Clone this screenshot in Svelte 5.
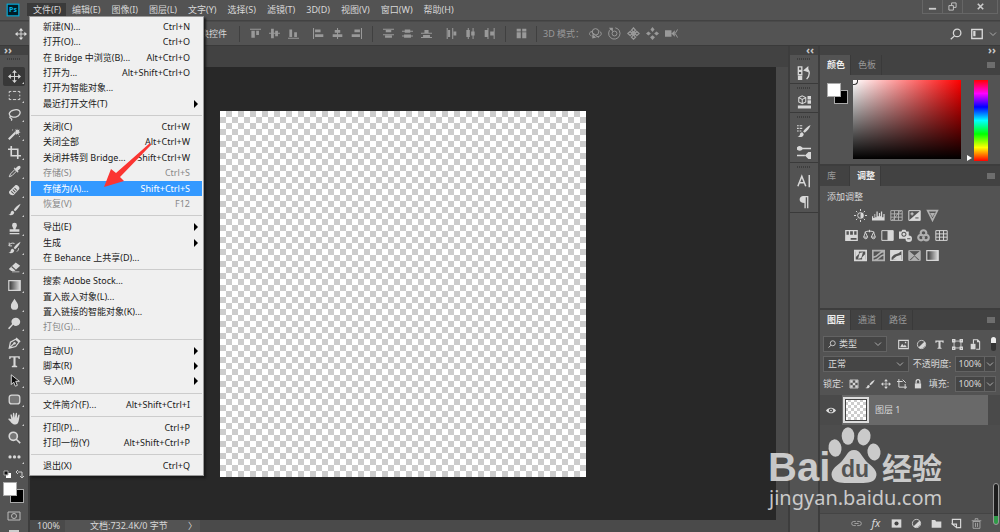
<script>
  let menuOpen = $state(true);
  let tool = $state('移动');
  let blend = $state('正常');
  let opacity = $state('100%');
  let fillValue = $state('100%');

  const menus = ['编辑(E)', '图像(I)', '图层(L)', '文字(Y)', '选择(S)', '滤镜(T)', '3D(D)', '视图(V)', '窗口(W)', '帮助(H)'];

  const fileMenu = [
    { label: '新建(N)...', keys: 'Ctrl+N' },
    { label: '打开(O)...', keys: 'Ctrl+O' },
    { label: '在 Bridge 中浏览(B)...', keys: 'Alt+Ctrl+O' },
    { label: '打开为...', keys: 'Alt+Shift+Ctrl+O' },
    { label: '打开为智能对象...' },
    { label: '最近打开文件(T)', sub: true },
    null,
    { label: '关闭(C)', keys: 'Ctrl+W' },
    { label: '关闭全部', keys: 'Alt+Ctrl+W' },
    { label: '关闭并转到 Bridge...', keys: 'Shift+Ctrl+W' },
    { label: '存储(S)', keys: 'Ctrl+S', disabled: true },
    { label: '存储为(A)...', keys: 'Shift+Ctrl+S', active: true },
    { label: '恢复(V)', keys: 'F12', disabled: true },
    null,
    { label: '导出(E)', sub: true },
    { label: '生成', sub: true },
    { label: '在 Behance 上共享(D)...' },
    null,
    { label: '搜索 Adobe Stock...' },
    { label: '置入嵌入对象(L)...' },
    { label: '置入链接的智能对象(K)...' },
    { label: '打包(G)...', disabled: true },
    null,
    { label: '自动(U)', sub: true },
    { label: '脚本(R)', sub: true },
    { label: '导入(M)', sub: true },
    null,
    { label: '文件简介(F)...', keys: 'Alt+Shift+Ctrl+I' },
    null,
    { label: '打印(P)...', keys: 'Ctrl+P' },
    { label: '打印一份(Y)', keys: 'Alt+Shift+Ctrl+P' },
    null,
    { label: '退出(X)', keys: 'Ctrl+Q' },
  ];

  // s = stroked path, f = filled path, w = stroke width, all on a 16x16 grid
  const move = { s: 'M8 2v12M2 8h12', f: 'M8 0l3 3.500H5zM8 16l3-3.500H5zM0 8l3.500-3v6zM16 8l-3.500-3v6z' };
  const brush = { f: 'M15.500 1C12 2.500 8.500 6 7 8.500L8.800 10C11.500 8 14.500 4.500 15.500 1zM6 9.500c-2 0-2.500 1.500-2.800 3C3 13.500 2 14.300.5 14.300c3 1.400 7 .7 7.200-3z' };
  const contrast = { s: 'M8 2a6 6 0 1 0 0 12A6 6 0 0 0 8 2z', f: 'M12.500 3.500A6.500 6.500 0 0 1 3.500 12.500z' };

  const tools = [
    { name: '移动', ...move },
    { name: '矩形选框', s: 'M1.500 5V3H4M6 3h4M12 3h2.500v2M14.500 7v2M14.500 11v2H12M10 13H6M4 13H1.500v-2M1.500 9V7' },
    { name: '套索', s: 'M4.500 10.500C0 9 .8 4 7 2.500s9 1.500 7.500 5-6.500 4.500-10 3c-2-.8-3 1-1.500 1.800s2.200 1.700 1 3.200', w: 1.6 },
    { name: '魔棒', s: 'M1 15l8-8', w: 2.6, f: 'M11 1.500l.8 2.500 2.500-1-1 2.300 2.200 1.200-2.500.8.500 2.500-2-1.500-1.800 1.500.2-2.500L7.500 6l2.300-.8-.8-2.300 2 .8zM5 3l1.500.500L5 4.500zM13.500 11l1.500.500-1.500 1z' },
    { name: '裁剪', s: 'M4 0v12h12M0 4h12v12', w: 2 },
    { name: '吸管', s: 'M1.500 14.500L3 11l5.500-5.500 2 2L5 13z', f: 'M7 4l1.200-1 1.300 1.200C11 2 12.500.8 14 .8c1.500.4 2 2 .8 3.700L12 7l1 1.200L12 9.500z' },
    { name: '修复画笔', f: 'M1.500 9L9 1.500c2-1 5.500 2 5 4.500L7 13.500c-3 1.500-7-2-5.500-4.500z', mark: 'M6 7l3 3M8 5l3 3M4 9l3 3' },
    { name: '画笔', ...brush },
    { name: '图章', f: 'M6.800 9C6.500 7 5 6 5 4a3 3 0 0 1 6 0c0 2-1.500 3-1.800 5H14v3H2V9zM2 13.500h12V15H2z' },
    { name: '历史记录画笔', ...brush, s: 'M1 6c1-3 4-4 7-3M1.500 2v4h3.500M13 9c0 2-1 3-2 4' },
    { name: '橡皮擦', f: 'M1 11l8.500-8L15 7l-7 6.500H4zM5 14h9v1H5z', mark: 'M4.500 8l5 4.500' },
    { name: '渐变', gradient: true },
    { name: '水滴', f: 'M8 1c2.500 4 4.500 6 4.500 9a4.500 4.500 0 0 1-9 0c0-3 2-5 4.500-9z' },
    { name: '减淡', f: 'M10 1a5 5 0 1 1-3.600 8.500L1.500 15 0 13.700 5 8.500A5 5 0 0 1 10 1z' },
    { name: '钢笔', s: 'M1.500 15L3 7.500 9.500 4l4 3.500L9.500 13zM1.500 15l6-6M10 2.500l5 4.500', w: 1.5, f: 'M8 7.500a1.500 1.500 0 1 1 0 3 1.500 1.500 0 0 1 0-3z' },
    { name: '横排文字', f: 'M1.500 1.500h13V5h-1.300L12.500 3.200H9.300V13l2 .5V15H4.700v-1.500l2-.5V3.200H3.500L2.800 5H1.500z' },
    { name: '路径选择', s: 'M4 1v12l3-3 2 5 2.500-1-2-5H14z', black: true },
    { name: '圆角矩形', s: 'M4.500 2.500h7a3 3 0 0 1 3 3v5a3 3 0 0 1-3 3h-7a3 3 0 0 1-3-3v-5a3 3 0 0 1 3-3z', soft: true, w: 1.6 },
    { name: '抓手', f: 'M4 9L3 4c0-1.500 1.500-1.500 1.800 0L6 7.500V2c0-1.500 1.700-1.500 1.800 0l.4 5L9.500 1.800c.3-1.300 1.800-1 1.700.4L11 8l1.700-4.200c.5-1.200 1.800-.6 1.500.7C13.500 9 13.500 15 9 15.500c-4 .2-5-3-8.500-6.200C0 8 1.500 7 4 9z' },
    { name: '缩放', s: 'M6.500 1.500a5 5 0 1 0 0 10 5 5 0 0 0 0-10zM10.500 10.500L15 15', w: 2, soft: true },
    { name: '更多', f: 'M2.500 6.500a2 2 0 1 1 0 4 2 2 0 0 1 0-4zM8 6.500a2 2 0 1 1 0 4 2 2 0 0 1 0-4zM13.500 6.500a2 2 0 1 1 0 4 2 2 0 0 1 0-4z' },
  ];

  const alignGroups = [
    [
      { name: '顶对齐', f: 'M0 1h16v1.500H0zM2 4h5v10H2zM9 4h4v6H9z' },
      { name: '垂直居中对齐', f: 'M0 7h16v1.500H0zM3 1h4v14H3zM9 4h4v8H9z' },
      { name: '底对齐', f: 'M0 14h16v1.500H0zM2 2h4v11H2zM9 6h4v7H9z' },
    ],
    [
      { name: '左对齐', f: 'M0 0h1.500v16H0zM3 2h8v4H3zM3 9h12v4H3z' },
      { name: '水平居中对齐', f: 'M7.300 0h1.500v16H7.300zM4 3h8v4H4zM1 9h14v4H1z' },
      { name: '右对齐', f: 'M14.500 0H16v16h-1.500zM5 2h8v4H5zM1 9h12v4H1z' },
    ],
    [
      { name: '按顶分布', f: 'M0 1h16v1.500H0zM4 3h8v3H4zM0 9h16v1.500H0zM3 11h10v3H3z' },
      { name: '垂直居中分布', f: 'M0 4h16v1.500H0zM4 2h8v5H4zM0 11h16v1.500H0zM3 9.500h10v4.500H3z' },
      { name: '按底分布', f: 'M0 7h16v1.500H0zM5 3h6v4H5zM0 13h16v1.500H0zM3 10h10v3H3z' },
    ],
    [
      { name: '按左分布', f: 'M1 0h1.500v16H1zM3 3h3v10H3zM9 0h1.500v16H9zM11 5h4v6h-4z' },
      { name: '水平居中分布', f: 'M4 0h1.500v16H4zM2 3h5v10H2zM11 0h1.500v16H11zM9 5h5v6H9z' },
      { name: '按右分布', f: 'M5 0h1.500v16H5zM1 3h4v10H1zM14 0h1.500v16H14zM9 5h5v6H9z' },
    ],
  ];

  const modes3d = [
    { name: '旋转', s: 'M5 5c-5 1-6 4-2 6M13 5c4 3 2 7-4 7M8 2a4 4 0 1 1 0 8 4 4 0 0 1 0-8zM3 6l9 7', f: 'M4 9l5 4-5 1z' },
    { name: '滚动', s: 'M4 2a7 7 0 1 0 5-1M8 5a3 3 0 1 0 0 6 3 3 0 0 0 0-6z', f: 'M1 1h5v5z' },
    { name: '拖动', s: 'M8 1l2.500 3L8 6 5.500 4zM8 10l2.500 2.500L8 15l-2.500-2.500zM1 8l3-2.500L6 8l-2 2.500zM10 8l2-2.500L15 8l-3 2.500zM6 6l4 4M10 6l-4 4', w: 1.5 },
    { name: '滑动', f: 'M8 0l2.500 3L8 6 5.500 3zM8 10l3 2.500L8 16l-3-3.500zM0 8l3-2.500L6 8l-3 2.500zM10 8l3-2.500L16 8l-3 2.500z' },
    { name: '缩放', s: 'M15.500 3l-3 5 3 5', f: 'M0 4h8v8H0zM8 8l4-4v8z' },
  ];

  const adjustments = [
    [
      { name: '亮度/对比度', s: 'M8 4.500a3.500 3.500 0 1 0 0 7M8 0v2.500M8 13.500V16M0 8h2.500M13.500 8H16M2.500 2.500L4 4M12 12l1.500 1.500M2.500 13.500L4 12M12 4l1.500-1.500', f: 'M8 4a4 4 0 0 1 0 8z' },
      { name: '色阶', f: 'M0 14V9h1.500v2H3V6h1v4h1.500V3H7v6h1.500V5H10v4h1V3h1.500v7H14V6h1.500v8z' },
      { name: '曲线', s: 'M1 2h14v12H1zM5.500 2v12M10.500 2v12M1 6h14M1 10h14M2 14C8 12 8 4 14 2', dim: true },
      { name: '曝光度', s: 'M1 2h14v12H1zM3 6h4M5 4v4', f: 'M15 2v12H1z', mark: 'M9 11h4' },
      { name: '自然饱和度', s: 'M2 2h12L8 14z', w: 2, f: 'M5 5h6l-3 5z', dim: true },
    ],
    [
      { name: '色相/饱和度', s: 'M1 2h14v12H1zM1 8h14M5.500 2v6M10.500 2v6', w: 1.600, f: 'M1 8h14v3H1zM1 11h6v3H1z' },
      { name: '色彩平衡', s: 'M2 4c3-2 9-2 12 0M8 1v3M3 4L.8 10h5zM13 4l-2.800 6h5zM1 10.500c1 2 4 2 4.500 0M10.500 10.500c1 2 4 2 4.500 0' },
      { name: '黑白', s: 'M1 2h14v12H1z', f: 'M8 2h7v12H8z' },
      { name: '照片滤镜', f: 'M0 3h3l1-2h4l1 2h3v5l-4 4H0zM12 8a4 4 0 1 1 0 8 4 4 0 0 1 0-8z', mark: 'M6 4a2.500 2.500 0 1 0 .1 0M10 12h4' },
      { name: '通道混合器', s: 'M8 1.500a3.500 3.500 0 1 0 0 7 3.500 3.500 0 0 0 0-7zM5 7a3.500 3.500 0 1 0 0 7 3.500 3.500 0 0 0 0-7zM11 7a3.500 3.500 0 1 0 0 7 3.500 3.500 0 0 0 0-7z', w: 2.600, dim: true },
      { name: '颜色查找', s: 'M1 2h14v12H1zM5.500 2v12M10.500 2v12M1 6h14M1 10h14' },
    ],
    [
      { name: '反相', s: 'M1 2h14v12H1z', w: 2.200, f: 'M2 2h4v4l-4 4zM14 14h-4v-4l4-4zM11 4L9 11 5 12l2-7z' },
      { name: '色调分离', s: 'M1 2h14v12H1zM2 10c5 0 6-6 12-7M3 14c6-1 6-6 12-7', w: 2, dim: true },
      { name: '阈值', s: 'M1 2h14v12H1z', w: 1.800, f: 'M1 2h13l-3 3-6 2-4 4zM3 13l5-4 6-2v7z' },
      { name: '可选颜色', s: 'M1 2h14v12H1z', f: 'M1 2l7 6-7 6zM15 2L8 8l7 6zM3 14l5-5 5 5z', dim: true },
      { name: '渐变映射', gradient: true },
    ],
  ];

  const layerFilters = [
    { name: '像素', s: 'M1 2h14v12H1z', w: 1.6, f: 'M3 12l3-5 2.500 3L10 8l3 4zM10 4h2v2h-2z' },
    { name: '调整', ...contrast },
    { name: '文字', f: 'M2 2h12v3.500h-1.500L12 4H9.500v8.500L11 13v1H5v-1l1.500-.5V4H4l-.5 1.500H2z' },
    { name: '形状', s: 'M3 3h10v10H3z', f: 'M0 0h5v5H0zM11 0h5v5h-5zM0 11h5v5H0zM11 11h5v5h-5z', hollow: 'M2 2h1v1H2zM13 2h1v1h-1zM2 13h1v1H2zM13 13h1v1h-1z' },
    { name: '智能对象', s: 'M5 7V1h6l3 3v11H9M11 1v3h3', w: 1.6, f: 'M1 7h7v8H1z' },
  ];

  const locks = [
    { name: '锁定透明像素', s: 'M1.500 1.500h13v13h-13z', f: 'M2 2h4v4H2zM10 2h4v4h-4zM6 6h4v4H6zM2 10h4v4H2zM10 10h4v4h-4z' },
    { name: '锁定图像像素', ...brush },
    { name: '锁定位置', ...move },
    { name: '锁定画板', s: 'M3 0v13h13M0 4h9M13 8v8M9 1l5 5', w: 1.6 },
    { name: '锁定全部', s: 'M5 7V4a3 3 0 0 1 6 0v3', w: 2, f: 'M3 7h10v8H3z' },
  ];

  const layerActions = [
    { name: '链接图层', s: 'M7 5H4a3 3 0 0 0 0 6h3M9 5h3a3 3 0 0 1 0 6H9M5 8h6', dim: true },
    { name: '图层样式', fx: true },
    { name: '添加蒙版', f: 'M1 2h14v12H1z', dot: true },
    { name: '新建调整图层', ...contrast },
    { name: '新建组', f: 'M1 3h5l1.500 2H15v9H1z' },
    { name: '新建图层', s: 'M2 10V2h12v12H9M2 9h6v5z', w: 1.7 },
    { name: '删除图层', s: 'M3 5h10v10H3zM1 4h14M6 3V1h4v2M6.500 7v6M9.500 7v6', dim: true },
  ];

  const dock = [
    [{ name: '历史记录', s: 'M1.500 1h4v4h-4zM1.500 6h4v4h-4zM11 4c4 1 4 7 0 11', w: 1.500, f: 'M1 11h5v5H1zM7 5l6-5v7z' }],
    [{ name: '3D', s: 'M6 1l4 2v5l-4 2-4-2V3zM2 3l4 2 4-2M6 5v5', f: 'M12 1h4v4h-4zM12 6h4v4h-4zM1 12h15v3.500H1z' }],
    [
      { name: '画笔预设', s: 'M0 2h2M3 2h3M0 5h2M3 5h3M0 8h2M3 8h2', f: brush.f },
      { name: '画笔', s: 'M6 4h10M0 12h9', w: 1.6, f: 'M0 2.500C3 0 5 1 7 4 5 7 3 7 0 5.500zM9 12l4-4h3v8h-3z' },
    ],
    [
      { name: '字符', s: 'M1 14L5.500 2.500 10 14M2.500 10h6M14 1v14', w: 1.7 },
      { name: '段落', f: 'M7 1h6v14h-1.500V2.500H10V15H8.500V9C5 9 3 7.500 3 5s2-4 4-4z' },
    ],
  ];

  const search = { s: 'M9.500 1.500a5 5 0 1 0 0 10 5 5 0 0 0 0-10zM6 10.500L1 15', w: 1.7 };
</script>

{#snippet icon(i)}
  <svg class="icon" class:dim={i.dim} viewBox="0 0 16 16" aria-hidden="true">
    {#if i.gradient}
      <defs>
        <linearGradient id="grad-{i.name}">
          <stop offset="0" stop-color="#333" />
          <stop offset="1" stop-color="#ddd" />
        </linearGradient>
      </defs>
      <rect x="1" y="2" width="14" height="12" fill="url(#grad-{i.name})" stroke="currentColor" stroke-width="1.500" />
    {/if}
    {#if i.f}<path d={i.f} fill="currentColor" />{/if}
    {#if i.s}
      <path
        d={i.s}
        fill={i.black ? '#111' : i.soft ? '#777' : 'none'}
        stroke="currentColor"
        stroke-width={i.w ?? 1.2}
      />
    {/if}
    {#if i.mark}<path d={i.mark} fill="none" stroke="#535353" stroke-width="1.300" />{/if}
    {#if i.hollow}<path d={i.hollow} fill="#535353" />{/if}
    {#if i.dot}<circle cx="8" cy="8" r="3" fill="#444" />{/if}
  </svg>
{/snippet}

{#snippet chevron()}
  <svg class="chevron" viewBox="0 0 8 8" aria-hidden="true">
    <path d="M1 2.500l3 3 3-3" fill="none" stroke="currentColor" />
  </svg>
{/snippet}

{#snippet panelMenu()}
  <button class="panel-menu" aria-label="面板菜单">
    <svg viewBox="0 0 8 6" aria-hidden="true"><path d="M0 1h8M0 3h8M0 5h8" stroke="currentColor" /></svg>
  </button>
{/snippet}

<div class="app">
  <header class="menubar">
    <svg class="logo" viewBox="0 0 12 12" aria-label="Photoshop">
      <rect x="1" y="1" width="10" height="10" fill="#001d26" stroke="#00a8d6" />
      <text x="6" y="8" text-anchor="middle">Ps</text>
    </svg>
    <nav>
      <div class="file">
        <button class:open={menuOpen} onclick={() => (menuOpen = !menuOpen)}>文件(F)</button>
        {#if menuOpen}
          <ul class="file-menu">
            {#each fileMenu as item}
              {#if item}
                <li>
                  <button class:active={item.active} disabled={item.disabled}>
                    <span>{item.label}</span>
                    {#if item.keys}<span>{item.keys}</span>{/if}
                    {#if item.sub}<i class="arrow"></i>{/if}
                  </button>
                </li>
              {:else}
                <li class="rule" role="separator"></li>
              {/if}
            {/each}
          </ul>
          <svg class="pointer" viewBox="0 0 50 46" aria-hidden="true">
            <path d="M1 45L8 27l5 4L47 1l1 2L17 35l4 4z" fill="#fb3532" />
          </svg>
        {/if}
      </div>
      {#each menus as menu}
        <button>{menu}</button>
      {/each}
    </nav>
    <div class="window">
      <button aria-label="最小化"><svg viewBox="0 0 10 10"><path d="M1 7.500h8" stroke-width="2" /></svg></button>
      <button aria-label="还原"><svg viewBox="0 0 10 10"><path d="M1 4h5v5H1zM4 4V1h5v5H6" /></svg></button>
      <button class="close" aria-label="关闭"><svg viewBox="0 0 10 10"><path d="M2 2l6 6M8 2L2 8" stroke-width="1.800" /></svg></button>
    </div>
  </header>

  <div class="options">
    <div class="current">{@render icon(move)}</div>
    <span class="transform">换控件</span>
    {#each alignGroups as group, g}
      <div class="group" class:divided={g % 2 === 0}>
        {#each group as item}
          <button aria-label={item.name}>{@render icon(item)}</button>
        {/each}
      </div>
    {/each}
    <div class="group divided auto">
      <button aria-label="自动对齐">
        {@render icon({ f: 'M1 1h6v4H1zM9 1h6v4H9zM1 6h6v9H1zM9 6h6v9H9z' })}
      </button>
    </div>
    <div class="group divided modes">
      <span>3D 模式：</span>
      {#each modes3d as item}
        <button aria-label={item.name}>{@render icon(item)}</button>
      {/each}
    </div>
    <div class="right">
      <button aria-label="搜索">{@render icon(search)}</button>
      <button aria-label="工作区">
        {@render icon({ s: 'M1 2h14v12H1z', w: 1.8, f: 'M3 4h3v7H3z' })}
        {@render chevron()}
      </button>
    </div>
  </div>

  <div class="workspace">
    <aside class="tools">
      <div class="collapse left">››</div>
      <div class="grip"></div>
      {#each tools as item}
        <button
          class="tool"
          class:selected={tool === item.name}
          class:corner={item.name !== '缩放'}
          aria-label={item.name}
          onclick={() => (tool = item.name)}
        >
          {@render icon(item)}
        </button>
      {/each}
      <svg class="defaults" viewBox="0 0 22 8" aria-hidden="true">
        <path d="M3 3h5v5H3z" fill="#fff" />
        <path d="M1 1h4v4H1z" fill="#111" stroke="#aaa" />
        <path d="M15 2h4v5M15 0l-2 2 2 2M17 6l2 2 2-2" fill="none" stroke="#ccc" />
      </svg>
      <div class="swatches"><i class="back"></i><i class="front"></i></div>
      <button class="mask" aria-label="快速蒙版">
        <svg viewBox="0 0 14 10"><path d="M1 1h12v8H1z" /><circle cx="7" cy="5" r="2.500" /></svg>
      </button>
      <div class="screen"></div>
    </aside>

    <main>
      <div class="doc-tabs"></div>
      <div class="stage">
        <div class="canvas"><div class="artboard"></div></div>
        <div class="scroll"></div>
      </div>
      <footer>
        <span class="zoom">100%</span>
        <span class="info">文档:732.4K/0 字节</span>
        <span class="more">〉</span>
      </footer>
    </main>

    <aside class="dock">
      <div class="collapse">‹‹</div>
      {#each dock as group}
        <div class="dock-group">
          <div class="grip"></div>
          {#each group as item}
            <button aria-label={item.name}>{@render icon(item)}</button>
          {/each}
        </div>
      {/each}
    </aside>

    <aside class="panels">
      <div class="collapse">››</div>
      <section>
        <div class="tabs">
          <button class="on">颜色</button><button>色板</button>
          {@render panelMenu()}
        </div>
        <div class="color">
          <div class="swatches"><i class="back"></i><i class="front"></i></div>
          <div class="field"></div>
          <div class="hue"></div>
        </div>
      </section>

      <section class="adjust">
        <div class="tabs">
          <button>库</button><button class="on">调整</button>
          {@render panelMenu()}
        </div>
        <p>添加调整</p>
        {#each adjustments as row}
          <div class="row">
            {#each row as item}
              <button aria-label={item.name}>{@render icon(item)}</button>
            {/each}
          </div>
        {/each}
      </section>

      <section class="layers">
        <div class="tabs">
          <button class="on">图层</button><button>通道</button><button>路径</button>
          {@render panelMenu()}
        </div>
        <div class="line filter">
          <div class="select kind">
            {@render icon(search)}
            <select aria-label="图层过滤"><option>类型</option></select>
            {@render chevron()}
          </div>
          <div class="icons">
            {#each layerFilters as item}
              <button aria-label={item.name}>{@render icon(item)}</button>
            {/each}
          </div>
          <i class="toggle"></i>
        </div>
        <div class="line">
          <div class="select blend">
            <select aria-label="混合模式" bind:value={blend}><option>正常</option></select>
            {@render chevron()}
          </div>
          <label for="opacity">不透明度:</label>
          <div class="number">
            <input id="opacity" bind:value={opacity} />
            <span>{@render chevron()}</span>
          </div>
        </div>
        <div class="line">
          <span>锁定:</span>
          <div class="icons locks">
            {#each locks as item}
              <button aria-label={item.name}>{@render icon(item)}</button>
            {/each}
          </div>
          <label for="fill">填充:</label>
          <div class="number">
            <input id="fill" bind:value={fillValue} />
            <span>{@render chevron()}</span>
          </div>
        </div>
        <div class="layer">
          <button class="eye" aria-label="可见性">
            <svg viewBox="0 0 12 8">
              <path d="M0 4c3-4.500 9-4.500 12 0-3 4.500-9 4.500-12 0z" fill="#ddd" />
              <circle cx="6" cy="4" r="2.500" fill="#444" /><circle cx="6" cy="4" r="1" fill="#ddd" />
            </svg>
          </button>
          <div class="layer-body">
            <div class="thumb"></div>
            <span>图层 1</span>
          </div>
        </div>
        <div class="empty"></div>
        <div class="actions">
          {#each layerActions as item}
            <button aria-label={item.name}>
              {#if item.fx}<em>fx</em>{:else}{@render icon(item)}{/if}
            </button>
          {/each}
        </div>
      </section>
    </aside>
  </div>

  <svg class="watermark" viewBox="0 0 184 84" aria-label="Baidu 经验">
    <text class="brand" x="1" y="54">Bai</text>
    <ellipse cx="68" cy="21" rx="6.500" ry="8.700" transform="rotate(-8 68 21)" />
    <ellipse cx="81" cy="9" rx="6.300" ry="8.700" />
    <ellipse cx="97" cy="10" rx="6.500" ry="8.500" transform="rotate(12 97 10)" />
    <ellipse cx="107" cy="25" rx="6.500" ry="8.500" transform="rotate(-8 107 25)" />
    <path d="M87 23c7 0 8 8 14 13 6 5 10 9 8 14-2 7-12 6-22 6s-20 1-22-6c-2-6 3-10 8-14 6-5 7-13 14-13z" />
    <text class="du" x="74" y="50">du</text>
    <text class="exp" x="115" y="52">经验</text>
    <text class="site" x="2" y="78">jingyan.baidu.com</text>
  </svg>

  <div class="meter"></div>
</div>

<style>
  :global(body) {
    margin: 0;
    background: #535353;
  }

  .app {
    position: relative;
    display: flex;
    flex-direction: column;
    height: 100vh;
    overflow: hidden;
    background: #3d3d3d;
    color: #d8d8d8;
    font-family: 'Noto Sans', 'Noto Sans CJK SC', sans-serif;
    font-size: 9px;
    line-height: 12px;
  }

  button,
  input,
  select {
    margin: 0;
    padding: 0;
    border: 0;
    background: none;
    color: inherit;
    font: inherit;
  }

  button {
    display: flex;
    align-items: center;
    justify-content: center;
  }

  svg {
    display: block;
    flex: none;
  }

  .icon {
    width: 12px;
    height: 12px;
  }

  .icon.dim {
    opacity: 0.7;
  }

  .chevron {
    width: 8px;
    height: 8px;
    color: #aaa;
  }

  .menubar {
    display: flex;
    flex: none;
    height: 20px;
    background: #535353;
    border-bottom: 1px solid #424242;
  }

  .logo {
    width: 14px;
    height: 14px;
    margin: 3px 7px 0 6px;
  }

  .logo text {
    fill: #00b4e6;
    font-size: 6px;
    font-weight: bold;
  }

  nav {
    display: flex;
    align-items: flex-start;
    padding-top: 3px;
  }

  nav button {
    height: 13px;
    padding: 0 5px 0 6px;
    white-space: nowrap;
  }

  nav button.open {
    background: #3a3a3a;
  }

  .file {
    position: relative;
    z-index: 5;
  }

  .file-menu {
    position: absolute;
    top: 13px;
    left: 2px;
    display: flex;
    flex-direction: column;
    box-sizing: border-box;
    width: 175px;
    height: 460px;
    margin: 0;
    padding: 2px 1px 1px;
    list-style: none;
    background: #f0f0f0;
    border: 1px solid #999;
    box-shadow: 2px 2px 2px #1a1a1a;
    color: #1a1a1a;
  }

  .file-menu li {
    display: flex;
    flex: 2 0 0;
  }

  .file-menu .rule {
    flex: 1 0 0;
    align-items: center;
  }

  .rule::before {
    content: '';
    flex: 1;
    height: 1px;
    background: #ccc;
  }

  .file-menu button {
    flex: 1;
    justify-content: space-between;
    height: auto;
    padding: 0 12px;
  }

  .file-menu button:disabled {
    color: #888;
  }

  .file-menu button.active {
    background: #3399ff;
    color: #fff;
  }

  .arrow {
    margin-right: -8px;
    border: 4px solid transparent;
    border-right: 0;
    border-left-color: #000;
  }

  .pointer {
    position: absolute;
    top: 139px;
    left: 76px;
    width: 50px;
    height: 46px;
  }

  .window {
    display: flex;
    height: 13px;
    margin: 0 2px 0 auto;
    border: 1px solid #666;
    border-top: 0;
  }

  .window button {
    width: 20px;
    border-right: 1px solid #666;
  }

  .window .close {
    width: 34px;
    border: 0;
  }

  .window svg {
    width: 9px;
    height: 9px;
    fill: none;
    stroke: #ccc;
  }

  .options {
    display: flex;
    flex: none;
    align-items: center;
    box-sizing: border-box;
    height: 25px;
    background: #535353;
    border-top: 1px solid #4a4a4a;
    border-bottom: 1px solid #3a3a3a;
    white-space: nowrap;
  }

  .current {
    padding-left: 15px;
    color: #ddd;
  }

  .transform {
    width: 27px;
    margin: 0 12px 0 173px;
  }

  .group {
    display: flex;
    align-items: center;
    height: 16px;
    padding: 0 6px;
    color: #999;
  }

  .group.divided {
    padding-right: 0;
    border-left: 1px solid #404040;
  }

  .group.auto {
    padding-right: 5px;
  }

  .group button {
    width: 19px;
  }

  .group .icon {
    width: 11px;
    height: 11px;
  }

  .group.modes span {
    width: 43px;
  }

  .group.modes .icon {
    width: 13px;
    height: 13px;
  }

  .right {
    display: flex;
    gap: 9px;
    margin: 0 3px 0 auto;
  }

  .right button {
    gap: 6px;
  }

  .workspace {
    display: grid;
    flex: 1;
    grid-template-columns: 28px 1fr 28px 180px;
    gap: 2px;
    min-height: 0;
  }

  aside {
    display: flex;
    flex-direction: column;
    min-height: 0;
    background: #535353;
  }

  .collapse {
    flex: none;
    height: 9px;
    padding-right: 4px;
    background: #424242;
    color: #ccc;
    font-size: 11px;
    font-weight: bold;
    line-height: 7px;
    text-align: right;
  }

  .collapse.left {
    padding-left: 4px;
    text-align: left;
  }

  .grip {
    flex: none;
    align-self: center;
    width: 14px;
    height: 2px;
    margin: 3px auto 0;
    background: repeating-linear-gradient(90deg, #3d3d3d 0 1px, #535353 1px 2px);
  }

  .tools .grip {
    margin-bottom: 7px;
  }

  .tool {
    position: relative;
    flex: none;
    height: 19px;
    margin: 0 3px;
    border-radius: 2px;
  }

  .tool .icon {
    width: 13px;
    height: 13px;
  }

  .tool.selected {
    background: #383838;
  }

  .tool.corner::after {
    content: '';
    position: absolute;
    right: 1px;
    bottom: 2px;
    border: 1px solid #ccc;
    border-top-color: transparent;
    border-left-color: transparent;
  }

  .defaults {
    width: 22px;
    height: 8px;
    margin: 4px 3px;
  }

  .swatches {
    display: grid;
    flex: none;
    width: 21px;
    height: 21px;
    margin: 0 3px;
  }

  .swatches i {
    box-sizing: border-box;
    grid-area: 1 / 1;
    width: 14px;
    height: 14px;
    border: 1px solid #aaa;
  }

  .back {
    place-self: end;
    background: #000;
  }

  .front {
    background: #fff;
  }

  .mask {
    flex: none;
    margin-top: 8px;
  }

  .mask svg {
    width: 14px;
    height: 10px;
    fill: none;
    stroke: #bbb;
  }

  .screen {
    flex: none;
    width: 10px;
    height: 6px;
    margin: 9px auto 0;
    background: #ccc;
  }

  main {
    display: flex;
    flex-direction: column;
    min-width: 0;
    background: #282828;
  }

  .doc-tabs {
    flex: none;
    height: 21px;
    background: #424242;
  }

  .stage {
    display: flex;
    flex: 1;
  }

  .canvas {
    display: flex;
    flex: 1;
    align-items: center;
    justify-content: center;
  }

  .artboard {
    width: 366px;
    height: 366px;
    background: repeating-conic-gradient(#ccc 0 25%, #fff 0 50%) 0 0 / 12px 12px;
  }

  .scroll {
    width: 12px;
    background: #4a4a4a;
  }

  footer {
    display: flex;
    flex: none;
    height: 12px;
    background: #4a4a4a;
  }

  .zoom {
    width: 28px;
    padding-left: 7px;
  }

  .info {
    width: 98px;
    padding-left: 25px;
    background: #535353;
  }

  .more {
    width: 12px;
    background: #535353;
  }

  .dock-group {
    border-bottom: 1px solid #3a3a3a;
  }

  .dock-group button {
    width: 28px;
    height: 21px;
  }

  .dock-group .grip {
    margin-bottom: 2px;
  }

  .dock .icon {
    width: 14px;
    height: 14px;
  }

  section {
    border-bottom: 2px solid #3d3d3d;
  }

  .tabs {
    display: flex;
    height: 20px;
    margin-bottom: 5px;
    background: #424242;
  }

  .tabs button {
    justify-content: flex-start;
    min-width: 30px;
    padding: 0 5px 0 7px;
    border-right: 1px solid #3a3a3a;
    color: #999;
  }

  .tabs .on {
    background: #535353;
    color: #eee;
    font-weight: bold;
  }

  .tabs .panel-menu {
    justify-content: flex-end;
    margin-left: auto;
    border: 0;
  }

  .panel-menu svg {
    width: 8px;
    height: 6px;
  }

  .color {
    display: flex;
    padding: 0 12px 3px 4px;
  }

  .color .swatches {
    margin: 3px 5px 0 3px;
  }

  .field {
    flex: 1;
    height: 79px;
    margin-right: 13px;
    background: linear-gradient(transparent, #000), linear-gradient(90deg, #fff, #f00);
  }

  .field::before {
    content: '';
    display: block;
    width: 4px;
    height: 4px;
    border: 1px solid #333;
    border-width: 0 1px 1px 0;
    border-radius: 0 0 4px;
  }

  .hue {
    width: 14px;
    background: linear-gradient(#f00, #f0f, #00f, #0ff, #0f0, #ff0, #f00);
  }

  .hue::before {
    content: '';
    display: block;
    margin: 75px 0 0 -7px;
    width: 0;
    border: 3px solid transparent;
    border-right: 0;
    border-left: 5px solid #fff;
  }

  .adjust {
    height: 142px;
    flex: none;
  }

  .adjust p {
    margin: 0 0 2px 7px;
  }

  .adjust .row {
    display: flex;
    gap: 5px;
    justify-content: center;
    height: 20px;
    padding-right: 28px;
  }

  .adjust .icon {
    width: 13px;
    height: 13px;
  }

  .layers {
    display: flex;
    flex: 1;
    flex-direction: column;
    min-height: 0;
    border: 0;
  }

  .layers .tabs {
    flex: none;
    margin-bottom: 4px;
  }

  .line {
    display: flex;
    flex: none;
    align-items: center;
    justify-content: space-between;
    height: 20px;
    padding: 0 4px 0 3px;
    white-space: nowrap;
  }

  .select {
    display: flex;
    align-items: center;
    box-sizing: border-box;
    height: 16px;
    padding: 0 4px;
    background: #454545;
    border: 1px solid #636363;
  }

  .kind {
    width: 64px;
  }

  .blend {
    width: 86px;
  }

  .kind .icon {
    width: 8px;
    height: 8px;
    margin-right: 3px;
  }

  select {
    flex: 1;
    min-width: 0;
    appearance: none;
  }

  .icons {
    display: flex;
    gap: 7px;
  }

  .filter .icons .icon {
    width: 11px;
    height: 11px;
  }

  .locks {
    gap: 6px;
  }

  .locks .icon {
    width: 10px;
    height: 10px;
  }

  .toggle {
    width: 5px;
    height: 14px;
    background: linear-gradient(#eee 6px, #333 6px);
    border-radius: 4px;
  }

  .number {
    display: flex;
    height: 14px;
    border: 1px solid #636363;
    background: #454545;
  }

  .number input {
    width: 28px;
    text-align: center;
  }

  .number span {
    display: flex;
    align-items: center;
    padding: 0 1px;
    border-left: 1px solid #636363;
  }

  .layer {
    display: flex;
    flex: none;
    height: 30px;
    margin-top: 1px;
    background: #4a4a4a;
  }

  .eye {
    width: 22px;
  }

  .eye svg {
    width: 10px;
    height: 7px;
  }

  .layer-body {
    display: flex;
    flex: 1;
    gap: 6px;
    align-items: center;
    margin-right: 12px;
    padding-left: 1px;
    background: #696969;
  }

  .thumb {
    width: 22px;
    height: 22px;
    border: 2px solid #ddd;
    outline: 1px solid #444;
    outline-offset: -3px;
    background: repeating-conic-gradient(#ccc 0 25%, #fff 0 50%) 0 0 / 6px 6px;
  }

  .empty {
    flex: 1;
    background: #4d4d4d;
  }

  .actions {
    display: flex;
    flex: none;
    gap: 8px;
    height: 18px;
    padding-left: 30px;
    border-top: 1px solid #444;
  }

  .actions button {
    width: 12px;
  }

  .actions .icon {
    width: 11px;
    height: 11px;
  }

  .actions em {
    font-size: 11px;
  }

  .watermark {
    position: absolute;
    right: 49px;
    bottom: 21px;
    width: 184px;
    height: 84px;
    fill: #d8d8d8;
    opacity: 0.9;
  }

  .brand {
    font: bold 40px 'Liberation Sans', sans-serif;
  }

  .du {
    fill: #555;
    font: bold 23px 'Liberation Sans', sans-serif;
  }

  .exp {
    font: bold 30px 'Noto Sans CJK SC', sans-serif;
  }

  .site {
    font: 20px 'Noto Sans', sans-serif;
  }

  .meter {
    position: absolute;
    right: 1px;
    bottom: 7px;
    width: 4px;
    height: 40px;
    border: 1px solid #999;
    border-radius: 3px;
    background: linear-gradient(#1d1d1d 32px, #2f9b48 32px);
  }
</style>
